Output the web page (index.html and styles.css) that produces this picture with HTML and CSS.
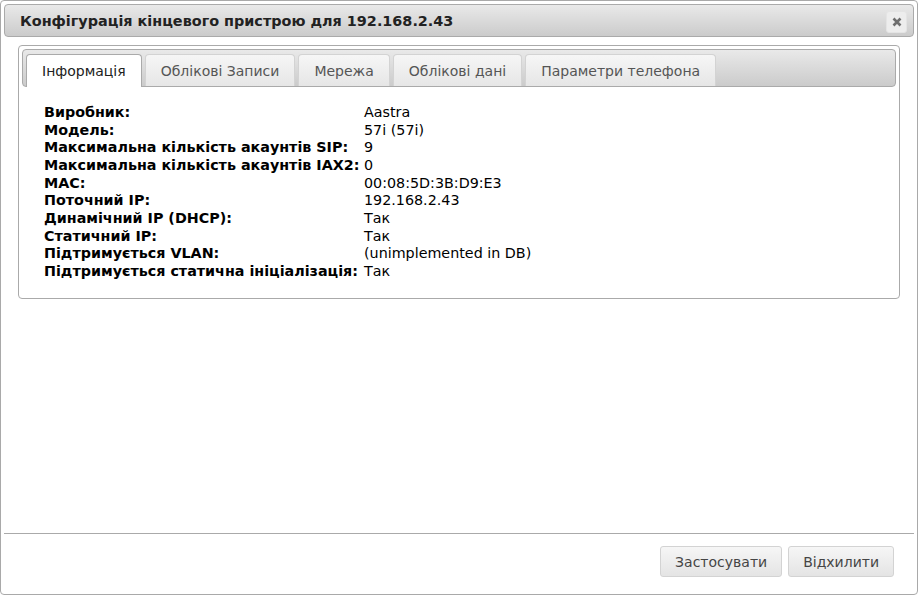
FILE: index.html
```html
<!DOCTYPE html>
<html lang="uk">
<head>
<meta charset="utf-8">
<title>Конфігурація кінцевого пристрою</title>
<link rel="stylesheet" href="styles.css">
</head>
<body>
<div class="dialog">
  <div class="titlebar">
    <span class="title">Конфігурація кінцевого пристрою для 192.168.2.43</span>
    <button class="close" aria-label="close">
      <svg width="10" height="10" viewBox="0 0 10 10"><path d="M1.5 1.5 L8.5 8.5 M8.5 1.5 L1.5 8.5" stroke="#6e6e6e" stroke-width="2.6" stroke-linecap="butt"/></svg>
    </button>
  </div>
  <div class="dlg-body">
    <div class="tabs">
      <ul class="nav">
        <li class="tab active">Інформація</li>
        <li class="tab">Облікові Записи</li>
        <li class="tab">Мережа</li>
        <li class="tab">Облікові дані</li>
        <li class="tab">Параметри телефона</li>
      </ul>
      <div class="panel">
        <div class="info">
          <div class="lbl">Виробник:</div><div class="val">Aastra</div>
          <div class="lbl">Модель:</div><div class="val">57i (57i)</div>
          <div class="lbl">Максимальна кількість акаунтів SIP:</div><div class="val">9</div>
          <div class="lbl">Максимальна кількість акаунтів IAX2:</div><div class="val">0</div>
          <div class="lbl">MAC:</div><div class="val">00:08:5D:3B:D9:E3</div>
          <div class="lbl">Поточний IP:</div><div class="val">192.168.2.43</div>
          <div class="lbl">Динамічний IP (DHCP):</div><div class="val">Так</div>
          <div class="lbl">Статичний IP:</div><div class="val">Так</div>
          <div class="lbl">Підтримується VLAN:</div><div class="val">(unimplemented in DB)</div>
          <div class="lbl">Підтримується статична ініціалізація:</div><div class="val">Так</div>
        </div>
      </div>
    </div>
  </div>
  <div class="buttonpane">
    <button class="btn">Застосувати</button>
    <button class="btn">Відхилити</button>
  </div>
</div>
</body>
</html>
```
FILE: styles.css
```css
* { box-sizing: border-box; }
html, body { margin: 0; padding: 0; background: #fff; }
body { font-family: "DejaVu Sans", Verdana, sans-serif; color: #222; }

.dialog {
  width: 918px;
  height: 595px;
  border: 1px solid #a9a9a9;
  border-radius: 4px;
  padding: 3px;
  display: flex;
  flex-direction: column;
  background: #fff;
}

.titlebar {
  height: 33px;
  border: 1px solid #aaa;
  border-radius: 4px;
  background: linear-gradient(#e9e9e9, #cbcbcb);
  display: flex;
  align-items: center;
  justify-content: space-between;
  padding: 0 6px 0 15px;
}
.title {
  font-weight: bold;
  font-size: 14.4px;
  color: #222;
}
.close {
  width: 21px;
  height: 22px;
  margin-top: 3px;
  padding: 0;
  border: 1px solid #e4e4e4;
  border-radius: 3px;
  background: #ededed;
  display: flex;
  align-items: center;
  justify-content: center;
}

.dlg-body {
  flex: 1;
  padding: 8px 14px 0 14px;
}

.tabs {
  border: 1px solid #aaa;
  border-radius: 4px;
  padding: 3px;
}
.nav {
  list-style: none;
  margin: 0;
  height: 38px;
  padding: 4px 3px 0 3px;
  border: 1px solid #aaa;
  border-radius: 4px;
  background: linear-gradient(#e9e9e9, #cbcbcb);
  display: flex;
  align-items: flex-start;
  gap: 3px;
}
.tab {
  height: 32px;
  padding: 0 15px;
  border: 1px solid #d3d3d3;
  border-bottom: 0;
  border-radius: 4px 4px 0 0;
  background: linear-gradient(#f6f6f6, #e6e6e6);
  font-size: 14px;
  line-height: 32px;
  color: #555;
  white-space: nowrap;
}
.tab.active {
  height: 33px;
  margin-bottom: -1px;
  background: #fff;
  border-color: #aaa;
  color: #212121;
  position: relative;
}

.panel {
  padding: 17px 22px 14px 22px;
}
.info {
  display: grid;
  grid-template-columns: 320px auto;
  font-size: 14.3px;
  line-height: 17.67px;
  color: #000;
}
.lbl { font-weight: bold; white-space: nowrap; }
.val { white-space: nowrap; }

.buttonpane {
  border-top: 1px solid #aaa;
  padding: 12px 20px 14px 0;
  display: flex;
  justify-content: flex-end;
  gap: 6px;
}
.btn {
  height: 31px;
  padding: 0 14px;
  border: 1px solid #d3d3d3;
  border-radius: 3px;
  background: linear-gradient(#f6f6f6, #e4e4e4);
  font-family: "DejaVu Sans", Verdana, sans-serif;
  font-size: 14px;
  color: #454545;
}
```
